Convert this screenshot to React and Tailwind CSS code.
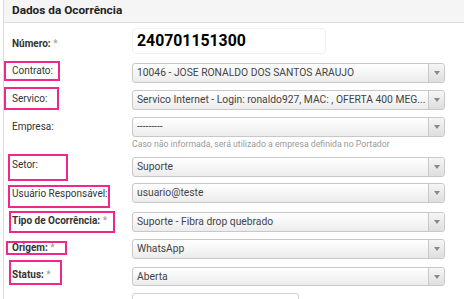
import React from "react";

function Select({ text, mt = "mt-0", h = "h-[20px]" }) {
  return (
    <div className={`flex ${h} ${mt} w-[313px] rounded-[3px] border border-[#c8c8c8] bg-linear-to-b from-white to-[#ececec]`}>
      <div className="flex-1 min-w-0 truncate whitespace-nowrap pl-[4px] text-[10.3px] leading-[18px] text-[#444]">{text}</div>
      <div className="flex w-[16px] shrink-0 items-center justify-center border-l border-[#c8c8c8] bg-linear-to-b from-[#f6f6f6] to-[#dedede] rounded-r-[3px]">
        <div className="h-0 w-0 border-l-[3px] border-r-[3px] border-t-[4px] border-l-transparent border-r-transparent border-t-[#888]" />
      </div>
    </div>
  );
}

function Box({ children, cls }) {
  return <div className={`whitespace-nowrap border-2 border-[#f0288c] ${cls}`}>{children}</div>;
}

export default function App() {
  return (
    <div className="h-[299px] w-[464px] overflow-hidden bg-white font-['Roboto',sans-serif] text-[#333]">
      <div className="ml-[3px] h-[299px] border-l border-[#dcdcdc]">
        <div className="flex h-[23px] items-center border-b border-[#dcdcdc] bg-[#f5f5f5] pl-[8px] text-[11.8px] font-bold text-[#222]">
          Dados da Ocorrência
        </div>

        {/* Número */}
        <div className="flex h-[38px] items-start">
          <div className="w-[128px] shrink-0 whitespace-nowrap pl-[8px] pt-[14px] text-[10px] font-bold leading-[14px]">
            Número: <span className="font-normal text-[#999]">*</span>
          </div>
          <div className="mt-[5px] flex h-[26px] w-[194px] items-center rounded-[4px] border border-[#f0f0f0] pl-[4px] text-[15.8px] font-bold text-black">
            240701151300
          </div>
        </div>

        {/* Contrato */}
        <div className="flex h-[26px] items-start">
          <div className="w-[128px] shrink-0">
            <Box cls="w-[56px] h-[20px] pl-[6px] pt-[1px] text-[10px] leading-[14px]">Contrato:</Box>
          </div>
          <Select text="10046 - JOSE RONALDO DOS SANTOS ARAUJO" mt="mt-[2px]" />
        </div>

        {/* Servico */}
        <div className="flex h-[30px] items-start">
          <div className="w-[128px] shrink-0">
            <Box cls="w-[55px] h-[23px] pl-[6px] pt-[3px] text-[10px] leading-[14px]">Servico:</Box>
          </div>
          <Select text="Servico Internet - Login: ronaldo927, MAC: , OFERTA 400 MEG..." mt="mt-[3px]" />
        </div>

        {/* Empresa */}
        <div className="flex h-[37px] items-start">
          <div className="w-[128px] shrink-0 pl-[8px] pt-[3px] text-[10px] leading-[14px]">Empresa:</div>
          <div>
            <Select text="---------" />
            <div className="mt-[1px] whitespace-nowrap text-[8.7px] leading-[12px] text-[#999]">
              Caso não informada, será utilizado a empresa definida no Portador
            </div>
          </div>
        </div>

        {/* Setor */}
        <div className="flex h-[29px] items-start">
          <div className="w-[128px] shrink-0 pl-[4px]">
            <Box cls="w-[60px] h-[27px] pl-[2px] pt-[2px] text-[10px] leading-[14px]">Setor:</Box>
          </div>
          <Select text="Suporte" mt="mt-[3px]" />
        </div>

        {/* Usuário */}
        <div className="flex h-[28px] items-start">
          <div className="w-[128px] shrink-0 pl-[4px] pt-[2px]">
            <Box cls="w-[102px] h-[23px] pl-[2px] pt-0 text-[10px] leading-[14px]">Usuário Responsável:</Box>
          </div>
          <Select text="usuario@teste" />
        </div>

        {/* Tipo */}
        <div className="flex h-[28px] items-start">
          <div className="w-[128px] shrink-0 pl-[5px]">
            <Box cls="w-[106px] h-[22px] pl-[1px] pt-[1px] text-[10px] font-bold leading-[14px]">
              Tipo de Ocorrência: <span className="font-normal text-[#999]">*</span>
            </Box>
          </div>
          <Select text="Suporte - Fibra drop quebrado" mt="mt-[1px]" />
        </div>

        {/* Origem */}
        <div className="flex h-[21px] items-start">
          <div className="w-[128px] shrink-0 pl-[2px] pt-[2px]">
            <Box cls="w-[61px] h-[14px] pl-[4px] text-[10px] font-bold leading-[10px]">
              Origem: <span className="font-normal text-[#999]">*</span>
            </Box>
          </div>
          <Select text="WhatsApp" />
        </div>

        {/* Status */}
        <div className="flex h-[33px] items-start">
          <div className="w-[128px] shrink-0 pl-[5px]">
            <Box cls="w-[53px] h-[25px] pl-[1px] pt-[6px] text-[10px] font-bold leading-[14px]">
              Status: <span className="font-normal text-[#999]">*</span>
            </Box>
          </div>
          <Select text="Aberta" mt="mt-[7px]" h="h-[19px]" />
        </div>

        {/* Last */}
        <div className="flex items-start">
          <div className="w-[128px] shrink-0" />
          <div className="h-[20px] w-[167px] rounded-[3px] border border-[#d0d0d0] bg-white" />
        </div>
      </div>
    </div>
  );
}
